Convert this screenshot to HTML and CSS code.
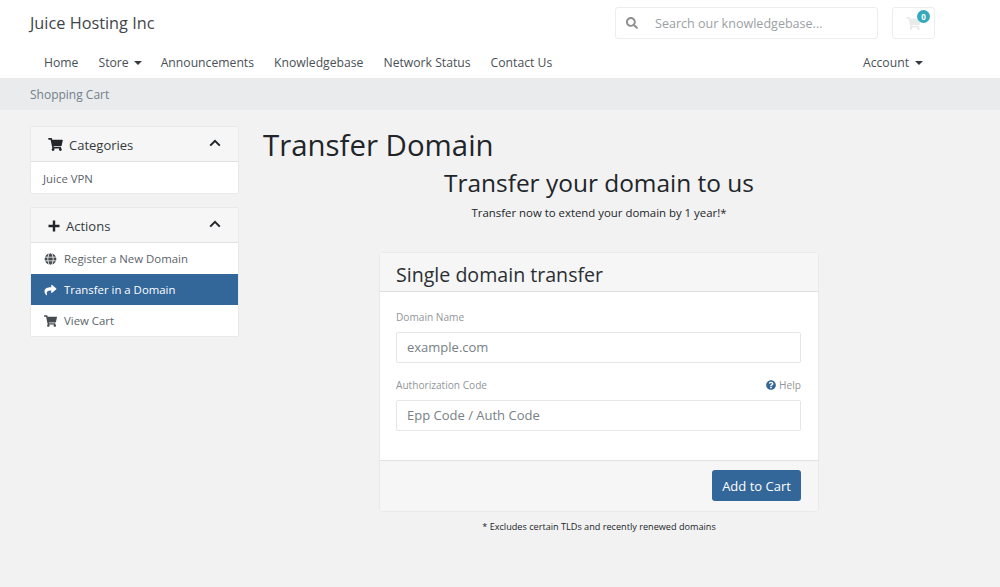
FILE: index.html
```html
<!DOCTYPE html>
<html lang="en">
<head>
  <meta charset="UTF-8" />
  <title>Transfer Domain | Juice Hosting Inc</title>
  <link rel="stylesheet" href="styles.css">
</head>
<body>
  <svg class="icon-defs" aria-hidden="true">
    <symbol id="i-cart" viewBox="0 0 576 512"><path d="M528.12 301.319l47.273-208C578.806 78.301 567.391 64 551.99 64H159.208l-9.166-44.81C147.758 8.021 137.93 0 126.529 0H24C10.745 0 0 10.745 0 24v16c0 13.255 10.745 24 24 24h69.883l70.248 343.435C147.325 417.1 136 435.222 136 456c0 30.928 25.072 56 56 56s56-25.072 56-56c0-15.674-6.447-29.835-16.824-40h209.647C430.447 426.165 424 440.326 424 456c0 30.928 25.072 56 56 56s56-25.072 56-56c0-22.172-12.888-41.332-31.579-50.405l5.517-24.276c3.413-15.018-8.002-29.319-23.403-29.319H218.117l-6.545-32h293.145c11.206 0 20.92-7.754 23.403-18.681z"/></symbol>
    <symbol id="i-chevron" viewBox="0 0 12 8"><path d="M1.2 6.6 6 1.8l4.8 4.8" fill="none" stroke="currentColor" stroke-width="2"/></symbol>
  </svg>

  <header class="header">
    <div class="header-top">
      <a class="brand" href="#">Juice Hosting Inc</a>
      <div class="header-tools">
        <div class="search">
          <svg class="search-icon" viewBox="0 0 512 512"><path d="M505 442.7L405.3 343c-4.5-4.5-10.6-7-17-7H372c27.6-35.3 44-79.7 44-128C416 93.1 322.9 0 208 0S0 93.1 0 208s93.1 208 208 208c48.3 0 92.7-16.4 128-44v16.3c0 6.4 2.5 12.5 7 17l99.7 99.7c9.4 9.4 24.6 9.4 33.9 0l28.3-28.3c9.4-9.4 9.4-24.6.1-34zM208 336c-70.7 0-128-57.2-128-128 0-70.7 57.2-128 128-128 70.7 0 128 57.2 128 128 0 70.7-57.2 128-128 128z"/></svg>
          <span class="search-text">Search our knowledgebase...</span>
        </div>
        <a class="cart-btn" href="#">
          <svg class="cart-icon"><use href="#i-cart"/></svg>
          <span class="cart-badge">0</span>
        </a>
      </div>
    </div>
    <nav class="nav">
      <div class="nav-left">
        <a href="#">Home</a>
        <a href="#">Store<span class="caret"></span></a>
        <a href="#">Announcements</a>
        <a href="#">Knowledgebase</a>
        <a href="#">Network Status</a>
        <a href="#">Contact Us</a>
      </div>
      <a href="#">Account<span class="caret"></span></a>
    </nav>
  </header>

  <div class="breadcrumb"><a href="#">Shopping Cart</a></div>

  <div class="page">
    <aside class="sidebar">
      <div class="side-card">
        <div class="side-head">
          <svg class="side-icon cart-head"><use href="#i-cart"/></svg>
          <span>Categories</span>
          <svg class="chevron"><use href="#i-chevron"/></svg>
        </div>
        <a class="side-item plain" href="#">Juice VPN</a>
      </div>
      <div class="side-card">
        <div class="side-head">
          <svg class="side-icon plus-head" viewBox="0 0 12 12"><path d="M6 .5v11M.5 6h11" stroke="currentColor" stroke-width="2.4" fill="none"/></svg>
          <span>Actions</span>
          <svg class="chevron"><use href="#i-chevron"/></svg>
        </div>
        <a class="side-item" href="#">
          <svg class="item-icon" viewBox="0 0 496 512"><path d="M336.5 160C322 70.7 287.8 8 248 8s-74 62.7-88.5 152h177zM152 256c0 22.2 1.2 43.5 3.3 64h185.3c2.1-20.5 3.3-41.8 3.3-64s-1.2-43.5-3.3-64H155.3c-2.1 20.5-3.3 41.8-3.3 64zm324.7-96c-28.6-67.9-86.5-120.4-158-141.6 24.4 33.8 41.2 84.7 50 141.6h108zM177.2 18.4C105.8 39.6 47.8 92.1 19.3 160h108c8.7-56.9 25.5-107.8 49.9-141.6zM487.4 192H372.7c2.1 21 3.3 42.5 3.3 64s-1.2 43-3.3 64h114.6c5.5-20.5 8.6-41.8 8.6-64s-3.1-43.5-8.5-64zM120 256c0-21.5 1.2-43 3.3-64H8.6C3.2 212.5 0 233.8 0 256s3.2 43.5 8.6 64h114.6c-2-21-3.2-42.5-3.2-64zm39.5 96c14.5 89.3 48.7 152 88.5 152s74-62.7 88.5-152h-177zm159.3 141.6c71.4-21.2 129.4-73.7 158-141.6h-108c-8.8 56.9-25.6 107.8-50 141.6zM19.3 352c28.6 67.9 86.5 120.4 158 141.6-24.4-33.8-41.2-84.7-50-141.6h-108z"/></svg>
          Register a New Domain
        </a>
        <a class="side-item active" href="#">
          <svg class="item-icon" viewBox="0 0 512 512"><path d="M503.691 189.836L327.687 37.851C312.281 24.546 288 35.347 288 56.015v80.053C127.371 137.907 0 170.1 0 322.326c0 61.441 39.581 122.309 83.333 154.132 13.653 9.931 33.111-2.533 28.077-18.631C66.066 312.814 132.917 274.316 288 272.085V360c0 20.7 24.3 31.453 39.687 18.164l176.004-152c11.071-9.562 11.086-26.753 0-36.328z"/></svg>
          Transfer in a Domain
        </a>
        <a class="side-item" href="#">
          <svg class="item-icon"><use href="#i-cart"/></svg>
          View Cart
        </a>
      </div>
    </aside>

    <main class="main">
      <h1>Transfer Domain</h1>
      <div class="intro">
        <h2>Transfer your domain to us</h2>
        <p>Transfer now to extend your domain by 1 year!*</p>
      </div>

      <form class="transfer-card">
        <h3 class="card-head">Single domain transfer</h3>
        <div class="card-body">
          <div class="field">
            <div class="label-row"><label for="domain">Domain Name</label></div>
            <input id="domain" type="text" placeholder="example.com">
          </div>
          <div class="field">
            <div class="label-row">
              <label for="epp">Authorization Code</label>
              <a class="help" href="#">
                <svg class="help-icon" viewBox="0 0 512 512"><path d="M504 256c0 136.997-111.043 248-248 248S8 392.997 8 256C8 119.083 119.043 8 256 8s248 111.083 248 248zM262.655 90c-54.497 0-89.255 22.957-116.549 63.758-3.536 5.286-2.353 12.415 2.715 16.258l34.699 26.31c5.205 3.947 12.621 3.008 16.665-2.122 17.864-22.658 30.113-35.797 57.303-35.797 20.429 0 45.698 13.148 45.698 32.958 0 14.976-12.363 22.667-32.534 33.976C247.128 238.528 216 254.941 216 296v4c0 6.627 5.373 12 12 12h56c6.627 0 12-5.373 12-12v-1.333c0-28.462 83.186-29.647 83.186-106.667 0-58.002-60.165-102-116.531-102zM256 338c-25.365 0-46 20.635-46 46 0 25.364 20.635 46 46 46s46-20.636 46-46c0-25.365-20.635-46-46-46z"/></svg>
                Help
              </a>
            </div>
            <input id="epp" type="text" placeholder="Epp Code / Auth Code">
          </div>
        </div>
        <div class="card-foot">
          <button type="button">Add to Cart</button>
        </div>
      </form>

      <p class="footnote">* Excludes certain TLDs and recently renewed domains</p>
    </main>
  </div>
</body>
</html>
```

FILE: styles.css
```css
* {
  box-sizing: border-box;
}

body {
  margin: 0;
  height: 587px;
  overflow: hidden;
  font-family: 'Open Sans', sans-serif;
  font-size: 12px;
  color: #212529;
  background: #f2f2f2;
}

a {
  color: inherit;
  text-decoration: none;
}

.icon-defs {
  display: none;
}

.header {
  height: 78px;
  padding: 0 65px 0 30px;
  background: #fff;
}

.header-top {
  display: flex;
  justify-content: space-between;
  height: 46px;
  padding-top: 7px;
}

.brand {
  font-size: 16.3px;
  line-height: 32px;
  color: #3f454a;
}

.header-tools {
  display: flex;
  gap: 14px;
}

.search {
  display: flex;
  align-items: center;
  width: 263px;
  height: 32px;
  padding-left: 10px;
  background: #fff;
  border: 1px solid #ebedef;
  border-radius: 3px;
}

.search-icon {
  width: 12px;
  height: 12px;
  fill: #8e8e8e;
}

.search-text {
  margin-left: 17px;
  font-size: 12.55px;
  color: #9a9fa4;
}

.cart-btn {
  position: relative;
  display: flex;
  align-items: center;
  justify-content: center;
  width: 43px;
  height: 32px;
  border: 1px solid #ebedef;
  border-radius: 3px;
}

.cart-icon {
  width: 15px;
  height: 13px;
  fill: #e9ebeb;
}

.cart-badge {
  position: absolute;
  top: 2px;
  right: 4px;
  width: 13px;
  height: 13px;
  border-radius: 50%;
  background: #36a9bd;
  color: #fff;
  font-size: 8px;
  font-weight: 700;
  line-height: 13px;
  text-align: center;
}

.nav {
  display: flex;
  justify-content: space-between;
  padding: 0 14px;
  font-size: 12.2px;
  line-height: 33px;
  color: #4a5055;
}

.nav-left {
  display: flex;
  gap: 20px;
}

.caret {
  display: inline-block;
  margin: 0 -1.5px 0 5.5px;
  vertical-align: 2px;
  border-top: 4px solid #343a40;
  border-left: 4px solid transparent;
  border-right: 4px solid transparent;
}

.breadcrumb {
  height: 32px;
  padding-left: 30px;
  background: #e9ebec;
  color: #74808b;
  font-size: 12px;
  line-height: 33px;
}

.page {
  display: grid;
  grid-template-columns: 209px 1fr;
  gap: 24px;
  padding: 16px 65px 0 30px;
}

.side-card {
  margin-bottom: 13px;
  background: #fff;
  border: 1px solid #e9e9e9;
  border-radius: 2px;
}

.side-head {
  display: flex;
  align-items: center;
  height: 35px;
  padding: 1px 17px 0;
  background: #f6f6f6;
  border-bottom: 1px solid #e2e2e2;
  color: #343a40;
  font-size: 13px;
}

.side-icon {
  fill: #212529;
  color: #212529;
}

.cart-head {
  width: 15px;
  height: 13px;
  margin-right: 6px;
}

.plus-head {
  width: 12px;
  height: 12px;
  margin-right: 6px;
}

.chevron {
  width: 12px;
  height: 8px;
  margin-left: auto;
  margin-top: -3px;
  color: #212529;
}

.side-item {
  display: flex;
  align-items: center;
  height: 31px;
  padding: 0 13px;
  color: #5c6369;
  font-size: 11.4px;
}

.side-item.plain {
  padding: 1px 12px 0;
}

.item-icon {
  width: 13px;
  height: 12px;
  margin-right: 7px;
  fill: #454b50;
}

.side-item.active {
  background: #336699;
  color: #fff;
}

.side-item.active .item-icon {
  fill: #fff;
}

.main h1 {
  margin: 1px 0 0;
  font-size: 29.4px;
  font-weight: 400;
  line-height: 36px;
}

.intro {
  text-align: center;
}

.intro h2 {
  margin: 2px 0 0;
  font-size: 24.45px;
  font-weight: 400;
  line-height: 36px;
}

.intro p {
  margin: 3px 0 0;
  font-size: 11.4px;
  line-height: 18px;
}

.transfer-card {
  width: 440px;
  margin: 30px auto 0;
  background: #fff;
  border: 1px solid #e9e9e9;
  border-radius: 4px;
}

.card-head {
  margin: 0;
  height: 39px;
  padding: 0 16px;
  background: #f6f6f6;
  border-bottom: 1px solid #dfdfdf;
  font-size: 19.6px;
  font-weight: 400;
  line-height: 43px;
  color: #2b2f33;
}

.card-body {
  height: 168px;
  padding: 17px 17px 0 16px;
}

.field {
  margin-bottom: 14px;
}

.label-row {
  display: flex;
  justify-content: space-between;
  align-items: center;
  height: 16px;
  margin-bottom: 7px;
  font-size: 10.15px;
  color: #92969a;
}

.help {
  display: flex;
  align-items: center;
  gap: 3px;
  color: #92969a;
}

.help-icon {
  width: 10px;
  height: 10px;
  fill: #336699;
}

input {
  display: block;
  width: 100%;
  height: 31px;
  padding: 0 10px 2px;
  border: 1px solid #e6e6e6;
  border-radius: 2px;
  background: #fff;
  font-family: inherit;
  font-size: 13px;
}

input::placeholder {
  color: #787f85;
  opacity: 1;
}

.card-foot {
  display: flex;
  justify-content: flex-end;
  height: 51px;
  padding: 9px 17px 0 0;
  background: #f6f6f6;
  border-top: 1px solid #e2e2e2;
  border-radius: 0 0 4px 4px;
}

button {
  width: 89px;
  height: 31px;
  padding: 0;
  border: 0;
  border-radius: 3px;
  background: #336699;
  color: #fff;
  font-family: inherit;
  font-size: 13px;
}

.footnote {
  margin: 8px 0 0;
  font-size: 9.15px;
  line-height: 13px;
  text-align: center;
}
```
